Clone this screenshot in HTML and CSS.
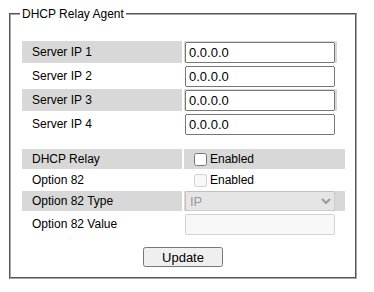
FILE: index.html
```html
<!DOCTYPE html>
<html>
<head>
<meta charset="utf-8">
<link rel="stylesheet" href="styles.css">
</head>
<body>
<fieldset class="agent">
  <legend class="agent-title">DHCP Relay Agent</legend>
  <div class="table servers">
    <div class="row shaded"><div class="cell label">Server IP 1</div><div class="cell field"><input class="ip" type="text" value="0.0.0.0"></div></div>
    <div class="row"><div class="cell label">Server IP 2</div><div class="cell field"><input class="ip" type="text" value="0.0.0.0"></div></div>
    <div class="row shaded"><div class="cell label">Server IP 3</div><div class="cell field"><input class="ip" type="text" value="0.0.0.0"></div></div>
    <div class="row"><div class="cell label">Server IP 4</div><div class="cell field"><input class="ip" type="text" value="0.0.0.0"></div></div>
  </div>
  <div class="table options">
    <div class="row shaded"><div class="cell label">DHCP Relay</div><div class="cell field"><label class="check"><input type="checkbox" class="box">Enabled</label></div></div>
    <div class="row"><div class="cell label">Option 82</div><div class="cell field"><label class="check"><input type="checkbox" class="box" disabled>Enabled</label></div></div>
    <div class="row shaded"><div class="cell label">Option 82 Type</div><div class="cell field"><select class="choice" disabled><option>IP</option></select></div></div>
    <div class="row tall"><div class="cell label">Option 82 Value</div><div class="cell field"><input class="ip" type="text" disabled></div></div>
  </div>
  <div class="actions"><button class="update" type="button">Update</button></div>
</fieldset>
</body>
</html>
```
FILE: styles.css
```css
html, body {
  margin: 0;
  padding: 0;
  background: #ffffff;
}
body {
  font-family: "Liberation Sans", Arial, sans-serif;
  font-size: 12px;
  color: #000000;
}
.agent {
  box-sizing: border-box;
  width: 348px;
  margin: 7px 0 0 9px;
  padding: 20px 11px 10px 11px;
  border: 2px groove #a8a8a8;
  min-inline-size: 0;
}
.agent-title {
  font-size: 12px;
  line-height: 14px;
  padding: 0 2px;
  margin-left: -2px;
}
.table {
  display: flex;
  flex-direction: column;
}
.servers {
  row-gap: 2px;
}
.servers .row {
  display: grid;
  grid-template-columns: 160px 153px;
  column-gap: 2px;
  height: 22px;
}
.options {
  margin-top: 14px;
  row-gap: 1px;
}
.options .row {
  display: grid;
  grid-template-columns: 160px 161px;
  column-gap: 2px;
  height: 20px;
}
.options .row.tall {
  height: 24px;
}
.cell {
  display: flex;
  align-items: center;
}
.label {
  padding-left: 10px;
}
.field {
  padding-left: 1px;
}
.row.shaded .cell {
  background: #d8d8d8;
}
.ip {
  box-sizing: border-box;
  width: 150px;
  height: 21px;
  margin: 0;
  font-family: "Liberation Sans", Arial, sans-serif;
  font-size: 13px;
  padding: 1px 2px;
}
.check {
  display: flex;
  align-items: center;
  font-size: 12px;
}
.box {
  width: 13px;
  height: 13px;
  margin: 0 3px 0 9px;
}
.choice {
  box-sizing: border-box;
  width: 150px;
  height: 20px;
  margin: 0;
  font-family: "Liberation Sans", Arial, sans-serif;
  font-size: 13px;
}
.actions {
  display: flex;
  justify-content: center;
  margin-top: 11px;
}
.update {
  box-sizing: border-box;
  width: 80px;
  height: 20px;
  margin: 0;
  padding: 0;
  font-family: "Liberation Sans", Arial, sans-serif;
  font-size: 13px;
}
```
